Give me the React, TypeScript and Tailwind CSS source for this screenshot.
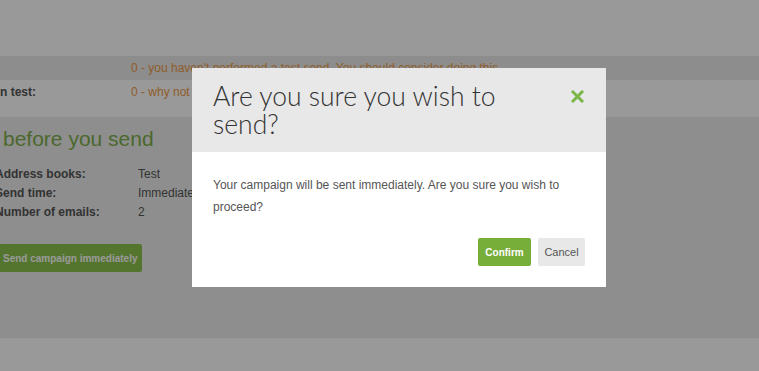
import React from 'react'

const summary = [
  { label: 'Address books:', value: 'Test' },
  { label: 'Send time:', value: 'Immediately' },
  { label: 'Number of emails:', value: '2' },
]

const App = () => {
  return (
    <div className="relative w-[759px] h-[371px] overflow-hidden bg-white font-['Liberation_Sans',Arial,sans-serif]">
      {/* page underneath the overlay */}
      <div className="h-[56px]" />
      <div className="h-[24px] bg-[#ebebeb] flex items-center text-[12px]">
        <div className="w-[131px]" />
        <span className="text-[#ee9b45] whitespace-nowrap">
          0 - you haven&apos;t performed a test send. You should consider doing this
        </span>
      </div>
      <div className="h-[24px] flex items-center text-[12px]">
        <div className="w-[131px] font-bold text-[#555]">n test:</div>
        <span className="text-[#ee9b45] whitespace-nowrap">0 - why not send a test now?</span>
      </div>
      <div className="h-[13px]" />
      <div className="h-[221px] bg-[#ededed] pt-[9px]">
        <h2 className="text-[21px] leading-[26px] text-[#7eae4c] pl-[3px]">before you send</h2>
        <div className="mt-[12px] ml-[-5px] text-[12px] text-[#555]">
          {summary.map((row) => (
            <div key={row.label} className="flex h-[19px] items-center">
              <div className="w-[143px] font-bold">{row.label}</div>
              <div>{row.value}</div>
            </div>
          ))}
        </div>
        <button className="mt-[23px] ml-[-6px] h-[28px] w-[148px] pl-[9px] text-left rounded-[2px] bg-[#8cc44c] text-white text-[10px] font-bold">
          Send campaign immediately
        </button>
      </div>

      {/* overlay */}
      <div className="absolute inset-0 bg-black/40" />

      {/* modal */}
      <div className="absolute left-[192px] top-[68px] w-[414px] h-[219px] bg-white flex flex-col">
        <div className="h-[84px] bg-[#e8e8e8] flex items-start justify-between pl-[21px] pr-[22px] pt-[14px]">
          <h1 className="font-['Lato',sans-serif] font-light text-[26.5px] leading-[28px] text-[#333] w-[310px]">
            Are you sure you wish to send?
          </h1>
          <svg width="13" height="13" viewBox="0 0 13 13" className="mt-[8px]">
            <path d="M2 2 L11 11 M11 2 L2 11" stroke="#7ab648" strokeWidth="3" strokeLinecap="square" />
          </svg>
        </div>
        <div className="px-[21px] pt-[22px] text-[12px] leading-[22px] text-[#555]">
          Your campaign will be sent immediately. Are you sure you wish to proceed?
        </div>
        <div className="flex justify-end gap-[7px] px-[21px] mt-[20px]">
          <button className="h-[28px] w-[53px] rounded-[2px] bg-[#77ad39] text-white text-[10px] font-bold">
            Confirm
          </button>
          <button className="h-[28px] w-[47px] rounded-[2px] bg-[#e8e8e8] text-[#555] text-[11px]">
            Cancel
          </button>
        </div>
      </div>
    </div>
  )
}

export default App
